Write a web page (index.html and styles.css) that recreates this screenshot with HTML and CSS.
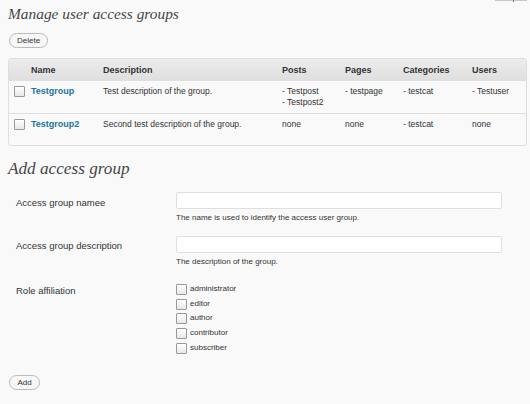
FILE: index.html
```html
<!DOCTYPE html>
<html>
<head>
<meta charset="utf-8">
<link rel="stylesheet" href="styles.css">
</head>
<body>
<div class="screen-meta"><span class="tick"></span></div>
<div class="wrap">
  <h2 class="title title-manage">Manage user access groups</h2>
  <div class="actions"><button class="btn btn-delete">Delete</button></div>
  <table class="groups">
    <thead>
      <tr>
        <th class="c-cb"></th>
        <th class="c-name">Name</th>
        <th class="c-desc">Description</th>
        <th class="c-posts">Posts</th>
        <th class="c-pages">Pages</th>
        <th class="c-cats">Categories</th>
        <th class="c-users">Users</th>
      </tr>
    </thead>
    <tbody>
      <tr>
        <td class="c-cb"><input type="checkbox" class="cb"></td>
        <td class="c-name"><a href="#">Testgroup</a></td>
        <td>Test description of the group.</td>
        <td>- Testpost<br>- Testpost2</td>
        <td>- testpage</td>
        <td>- testcat</td>
        <td>- Testuser</td>
      </tr>
      <tr>
        <td class="c-cb"><input type="checkbox" class="cb"></td>
        <td class="c-name"><a href="#">Testgroup2</a></td>
        <td>Second test description of the group.</td>
        <td>none</td>
        <td>none</td>
        <td>- testcat</td>
        <td>none</td>
      </tr>
    </tbody>
  </table>

  <h2 class="title title-add">Add access group</h2>
  <div class="form">
    <div class="row row-name">
      <div class="label">Access group namee</div>
      <div class="field">
        <input type="text" class="text">
        <div class="desc">The name is used to identify the access user group.</div>
      </div>
    </div>
    <div class="row row-descr">
      <div class="label">Access group description</div>
      <div class="field">
        <input type="text" class="text">
        <div class="desc">The description of the group.</div>
      </div>
    </div>
    <div class="row row-roles">
      <div class="label">Role affiliation</div>
      <div class="field roles">
        <label class="role"><input type="checkbox" class="cb"> administrator</label>
        <label class="role"><input type="checkbox" class="cb"> editor</label>
        <label class="role"><input type="checkbox" class="cb"> author</label>
        <label class="role"><input type="checkbox" class="cb"> contributor</label>
        <label class="role"><input type="checkbox" class="cb"> subscriber</label>
      </div>
    </div>
  </div>
  <div class="actions actions-add"><button class="btn btn-add">Add</button></div>
</div>
</body>
</html>
```

FILE: styles.css
```css
html, body {
  margin: 0;
  padding: 0;
  background: #f9f9f9;
}
body {
  font-family: "Liberation Sans", Arial, sans-serif;
  color: #333;
  font-size: 11px;
  position: relative;
  width: 530px;
  height: 404px;
  overflow: hidden;
}
.screen-meta {
  position: absolute;
  top: 0;
  left: 495px;
  width: 32px;
  height: 1px;
  background: #c8c8c8;
}
.screen-meta .tick {
  position: absolute;
  left: 18px;
  top: 0;
  width: 1px;
  height: 2px;
  background: #777;
}
.wrap {
  padding: 0 3px 0 8px;
}
.title {
  font-family: "Liberation Serif", "Times New Roman", serif;
  font-style: italic;
  font-weight: normal;
  font-size: 16.5px;
  line-height: 26px;
  color: #464646;
  margin: 0;
  padding-top: 1px;
}
.title-manage { font-size: 15.4px; }
.actions {
  margin-top: 6px;
  height: 15px;
}
.btn {
  font-family: "Liberation Sans", Arial, sans-serif;
  font-size: 8px;
  color: #333;
  background: #f7f7f7;
  border: 1px solid #bbb;
  border-radius: 8px;
  height: 15px;
  line-height: 13px;
  padding: 0 7px;
  margin: 0 0 0 1px;
  display: block;
}
.btn-delete { width: 39px; }
.btn-add { width: 31px; padding: 0; }

.groups {
  margin-top: 10px;
  width: 519px;
  border-collapse: separate;
  border-spacing: 0;
  border: 1px solid #dfdfdf;
  border-radius: 3px;
  background: #f9f9f9;
  table-layout: fixed;
}
.groups th {
  text-align: left;
  font-weight: bold;
  font-size: 9px;
  color: #333;
  height: 21px;
  padding: 0 0 0 5px;
  background: linear-gradient(#ececec, #dfdfdf);
  border-bottom: 1px solid #dfdfdf;
}
.groups td {
  font-size: 8.5px;
  line-height: 11px;
  color: #333;
  vertical-align: top;
  padding: 5px 0 0 5px;
  height: 27px;
  border-bottom: 1px solid #dfdfdf;
}
.groups tbody tr:last-child td {
  border-bottom: none;
  height: 26px;
}
.groups .c-cb { width: 17px; padding-left: 0; }
.groups td.c-cb { padding: 5px 0 0 5px; width: 12px; }
.groups .c-name { width: 67px; }
.groups .c-desc { width: 174px; }
.groups .c-posts { width: 58px; }
.groups .c-pages { width: 53px; }
.groups .c-cats { width: 64px; }
.groups .c-users { width: auto; }
.groups a {
  color: #21759b;
  font-weight: bold;
  font-size: 9px;
  text-decoration: none;
}

.cb {
  -webkit-appearance: none;
  appearance: none;
  width: 11px;
  height: 11px;
  margin: 0;
  border: 1px solid #999;
  border-radius: 1px;
  background: linear-gradient(#ffffff, #e8e8e8);
  box-sizing: border-box;
  vertical-align: top;
}

.title-add {
  margin-top: 9px;
  font-size: 17.2px;
}
.form {
  padding-top: 0;
}
.row {
  display: grid;
  grid-template-columns: 168px 326px;
}
.label {
  padding-left: 8px;
  font-size: 9.5px;
  letter-spacing: 0;
  color: #333;
}
.row-name .label { padding-top: 15px; }
.row-descr { margin-top: 13px; }
.row-descr .label { padding-top: 4px; }
.row-roles { margin-top: 17px; }
.row-roles .label { padding-top: 1px; }
.text {
  display: block;
  box-sizing: border-box;
  width: 326px;
  height: 17px;
  margin: 0;
  border: 1px solid #dfdfdf;
  background: #fff;
  border-radius: 2px;
  padding: 0 3px;
}
.row-name .text { margin-top: 10px; }
.row-descr .text { margin-top: 0; }
.desc {
  font-size: 8px;
  color: #333;
  margin-top: 3px;
  line-height: 11px;
}
.roles {
  display: flex;
  flex-direction: column;
}
.role {
  display: flex;
  align-items: flex-start;
  gap: 3px;
  height: 14.7px;
  font-size: 8px;
  line-height: 10px;
  color: #333;
}
.actions-add {
  margin-top: 18px;
}
```
